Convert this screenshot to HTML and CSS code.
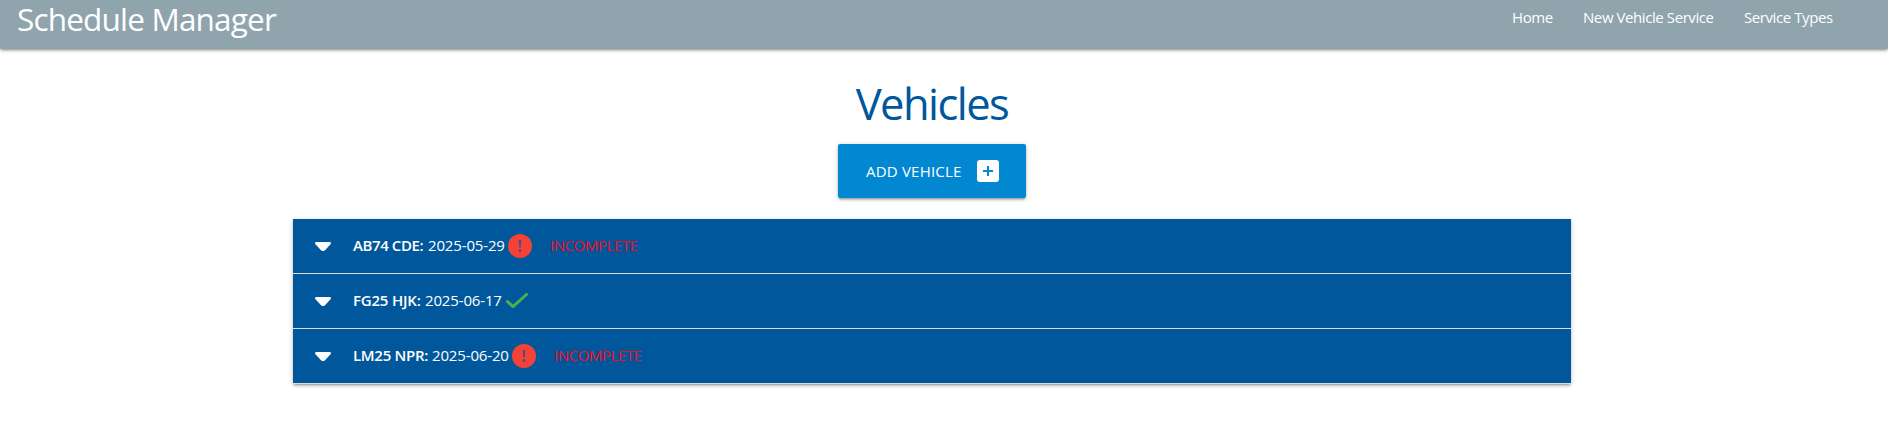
FILE: index.html
```html
<!DOCTYPE html>
<html lang="en">
<head>
<meta charset="utf-8">
<title>Schedule Manager</title>
<link rel="stylesheet" href="styles.css">
</head>
<body>
<nav class="nav">
  <a class="brand">Schedule Manager</a>
  <div class="links"><a class="l-home">Home</a><a class="l-new">New Vehicle Service</a><a class="l-types">Service Types</a></div>
</nav>
<main class="main">
  <h1 class="title">Vehicles</h1>
  <button class="btn"><span>ADD VEHICLE</span>
    <svg width="22" height="22" viewBox="0 0 22 22"><path fill="#fff" fill-rule="evenodd" d="M3 0h16a3 3 0 0 1 3 3v16a3 3 0 0 1-3 3H3a3 3 0 0 1-3-3V3a3 3 0 0 1 3-3zM10 6v4H6v2h4v4h2v-4h4v-2h-4V6z"/></svg>
  </button>
  <ul class="list">
    <li class="row">
      <svg class="caret" width="16" height="10" viewBox="0 0 16 10"><path d="M1.500 0h13c1.400 0 1.900 1.300 1 2.300L10 8.200Q8 10 6 8.200L.5 2.300C-.4 1.300.1 0 1.500 0z"/></svg>
      <b class="plate">AB74 CDE:</b><span class="date">2025-05-29</span>
      <svg class="alert" width="24" height="24" viewBox="0 0 24 24"><circle cx="12" cy="12" r="12"/><path d="M10.700 6h2.600l-.4 7.500h-1.800z"/><circle class="dot" cx="12" cy="16.500" r="1.500"/></svg>
      <span class="status">INCOMPLETE</span>
    </li>
    <li class="row">
      <svg class="caret" width="16" height="10" viewBox="0 0 16 10"><path d="M1.500 0h13c1.400 0 1.900 1.300 1 2.300L10 8.200Q8 10 6 8.200L.5 2.300C-.4 1.300.1 0 1.500 0z"/></svg>
      <b class="plate p2">FG25 HJK:</b><span class="date">2025-06-17</span>
      <svg class="check" width="22" height="16" viewBox="0 0 22 16"><path d="M1.500 8.500l5.500 5.200L20.500 1.500"/></svg>
    </li>
    <li class="row">
      <svg class="caret" width="16" height="10" viewBox="0 0 16 10"><path d="M1.500 0h13c1.400 0 1.900 1.300 1 2.300L10 8.200Q8 10 6 8.200L.5 2.300C-.4 1.300.1 0 1.500 0z"/></svg>
      <b class="plate p3">LM25 NPR:</b><span class="date">2025-06-20</span>
      <svg class="alert" width="24" height="24" viewBox="0 0 24 24"><circle cx="12" cy="12" r="12"/><path d="M10.700 6h2.600l-.4 7.500h-1.800z"/><circle class="dot" cx="12" cy="16.500" r="1.500"/></svg>
      <span class="status">INCOMPLETE</span>
    </li>
  </ul>
</main>
</body>
</html>
```

FILE: styles.css
```css
* { box-sizing: border-box; }
body { margin: 0; height: 446px; overflow: hidden; background: #fff; font-family: "Open Sans", "Noto Sans", sans-serif; font-size: 15px; color: #fff; }
.nav { height: 49px; background: #90a4ae; display: flex; justify-content: space-between; padding: 0 55px 0 17px; box-shadow: 0 2px 2px 0 rgba(0,0,0,.14), 0 3px 1px -2px rgba(0,0,0,.12), 0 1px 5px 0 rgba(0,0,0,.2); }
.brand { font-size: 31.500px; line-height: 37px; letter-spacing: -.82px; white-space: nowrap; }
.links { display: flex; line-height: 34px; white-space: nowrap; letter-spacing: -.42px; }
.l-home { width: 71px; }
.l-new { width: 161px; }
.l-types { width: 89px; }
.main { display: flex; flex-direction: column; align-items: center; width: 1278px; margin: 0 0 0 293px; }
.title { margin: 25px 0 0; height: 70px; line-height: 60px; font-size: 43.500px; font-weight: 400; letter-spacing: -1.550px; color: #01579b; white-space: nowrap; }
.btn { width: 188px; height: 54px; border: 0; border-radius: 2px; padding: 0 27px 0 28px; background: #0288d1; color: #fff; font: inherit; letter-spacing: .2px; display: flex; align-items: center; justify-content: space-between; white-space: nowrap; box-shadow: 0 2px 2px 0 rgba(0,0,0,.14), 0 3px 1px -2px rgba(0,0,0,.12), 0 1px 5px 0 rgba(0,0,0,.2); }
.list { list-style: none; width: 1278px; margin: 21px 0 0; padding: 0; box-shadow: 0 2px 2px 0 rgba(0,0,0,.14), 0 3px 1px -2px rgba(0,0,0,.12), 0 1px 5px 0 rgba(0,0,0,.2); }
.row { height: 55px; background: #01579b; border-bottom: 1px solid #ddd; display: flex; align-items: center; padding-left: 22px; white-space: nowrap; }
.caret { fill: #fff; margin: 2px 22px 0 0; }
.plate { font-weight: 600; width: 75px; letter-spacing: -.4px; margin-top: -2px; }
.p2 { width: 72px; letter-spacing: -.2px; }
.p3 { width: 79px; letter-spacing: -.3px; }
.date { width: 80px; letter-spacing: -.15px; margin-top: -2px; }
.alert { fill: #f44336; }
.alert path, .alert .dot { fill: #5b4b78; }
.status { margin: -2px 0 0 18px; color: #f50a1e; letter-spacing: -.45px; }
.check { fill: none; stroke: #4caf50; stroke-width: 3; stroke-linecap: round; stroke-linejoin: round; margin-left: 1px; }
```
